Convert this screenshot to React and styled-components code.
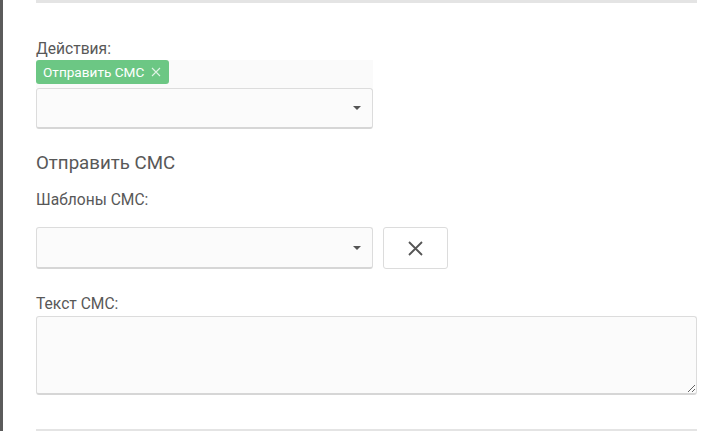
import React from "react";
import styled, { createGlobalStyle } from "styled-components";

const GlobalStyle = createGlobalStyle`
  html, body {
    margin: 0;
    padding: 0;
    background: #ffffff;
    font-family: Roboto, "Noto Sans", Arial, sans-serif;
    color: #555;
  }
`;

const Page = styled.div`
  display: flex;
  height: 431px;
  overflow: hidden;
`;

const Rail = styled.div`
  width: 3px;
  flex-shrink: 0;
  background: #5b5b5b;
`;

const Main = styled.div`
  margin-left: 33px;
  width: 661px;
  display: flex;
  flex-direction: column;
`;

const Band = styled.div`
  height: 3px;
  flex-shrink: 0;
  background: #e4e4e4;
  margin-top: ${(p) => p.$top || 0}px;
`;

const Label = styled.label`
  display: block;
  font-size: 15.6px;
  line-height: 20px;
  color: #585858;
  margin-top: ${(p) => p.$top || 0}px;
  margin-bottom: ${(p) => p.$bottom || 0}px;
`;

const TagStrip = styled.div`
  width: 337px;
  height: 28px;
  flex-shrink: 0;
  background: #fafafa;
  display: flex;
  align-items: flex-start;
`;

const Tag = styled.span`
  display: inline-flex;
  align-items: center;
  gap: 7px;
  height: 24px;
  padding: 0 8px 0 7px;
  border-radius: 3px;
  background: #6cc784;
  color: #fff;
  font-size: 13.6px;
  line-height: 24px;
`;

const Row = styled.div`
  display: flex;
  gap: 10px;
  flex-shrink: 0;
`;

const Select = styled.div`
  position: relative;
  box-sizing: border-box;
  flex-shrink: 0;
  width: 337px;
  height: ${(p) => p.$h || 42}px;
  background: #fbfbfb;
  border: 1px solid #dcdcdc;
  border-bottom: 2px solid #d6d6d6;
  border-radius: 3px;
`;

const Caret = styled.span`
  position: absolute;
  right: 11px;
  top: 50%;
  margin-top: -2px;
  width: 0;
  height: 0;
  border-left: 4px solid transparent;
  border-right: 4px solid transparent;
  border-top: 4px solid #555;
`;

const Heading = styled.h3`
  margin: 21px 0 0;
  font-size: 18.7px;
  line-height: 26px;
  font-weight: 400;
  color: #585858;
`;

const IconButton = styled.button`
  box-sizing: border-box;
  width: 65px;
  height: 42px;
  background: #fff;
  border: 1px solid #dcdcdc;
  border-radius: 3px;
  display: flex;
  align-items: center;
  justify-content: center;
  padding: 0;
`;

const TextArea = styled.textarea`
  box-sizing: border-box;
  display: block;
  flex-shrink: 0;
  width: 661px;
  height: 79px;
  margin: 0;
  background: #fbfbfb;
  border: 1px solid #dcdcdc;
  border-bottom: 2px solid #d6d6d6;
  border-radius: 3px;
  resize: vertical;
  outline: none;
  font-family: inherit;
`;

export default function App() {
  return (
    <>
      <GlobalStyle />
      <Page>
        <Rail />
        <Main>
          <Band />
          <Label $top={36} $bottom={1}>Действия:</Label>
          <TagStrip>
            <Tag>
              Отправить СМС
              <svg width="10" height="10" viewBox="0 0 10 10">
                <path d="M1 1 L9 9 M9 1 L1 9" stroke="#dff3e5" strokeWidth="1.1" fill="none" />
              </svg>
            </Tag>
          </TagStrip>
          <Select $h={41}>
            <Caret />
          </Select>
          <Heading>Отправить СМС</Heading>
          <Label $top={14} $bottom={17}>Шаблоны СМС:</Label>
          <Row>
            <Select>
              <Caret />
            </Select>
            <IconButton>
              <svg width="17" height="17" viewBox="0 0 17 17">
                <path d="M2 2 L15 15 M15 2 L2 15" stroke="#555" strokeWidth="1.8" fill="none" />
              </svg>
            </IconButton>
          </Row>
          <Label $top={25} $bottom={2}>Текст СМС:</Label>
          <TextArea />
          <Band $top={34} />
        </Main>
      </Page>
    </>
  );
}
